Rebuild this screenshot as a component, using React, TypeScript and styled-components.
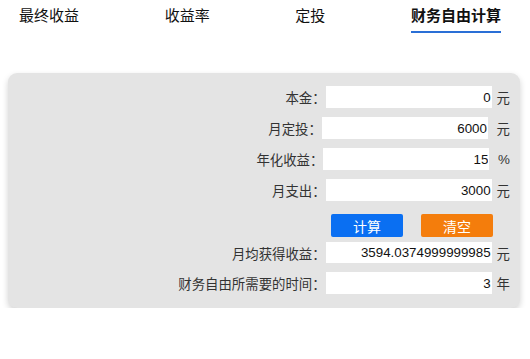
import styled, { createGlobalStyle } from 'styled-components'

const GlobalStyle = createGlobalStyle`
  body {
    margin: 0;
    background: #ffffff;
    font-family: 'Liberation Sans', 'Noto Sans CJK SC', sans-serif;
    color: #222;
  }
`

const Tabs = styled.div`
  display: flex;
  justify-content: space-between;
  align-items: flex-start;
  height: 35px;
  padding: 0 29px 0 19px;
  box-sizing: border-box;
`

const Tab = styled.div<{ $active?: boolean }>`
  padding-top: 7px;
  padding-bottom: ${props => (props.$active ? '6px' : '8px')};
  font-size: 15px;
  line-height: 18px;
  color: #111;
  font-weight: ${props => (props.$active ? 700 : 400)};
  border-bottom: ${props => (props.$active ? '2px solid #2a6fd6' : 'none')};
`

const Panel = styled.div`
  margin: 38px 10px 0 8px;
  padding: 13px 10px 14px 0;
  background: #e4e4e4;
  border-radius: 9px;
  box-shadow: 0 3px 6px rgba(0, 0, 0, 0.18);
`

const Row = styled.div<{ $h?: number; $mb?: number }>`
  display: flex;
  justify-content: flex-end;
  align-items: center;
  height: ${props => props.$h ?? 22}px;
  margin-bottom: ${props => props.$mb ?? 9}px;
  font-size: 13.4px;
  color: #333;
`

const Label = styled.span`
  margin-right: 0;
  white-space: pre;
`

const Field = styled.input`
  width: 166px;
  height: 100%;
  box-sizing: border-box;
  border: none;
  outline: none;
  background: #ffffff;
  padding: 0 1px 0 0;
  text-align: right;
  font-family: 'Liberation Sans', sans-serif;
  font-size: 13.33px;
  color: #111;
`

const Unit = styled.span`
  margin-left: 5px;
  white-space: pre;
  color: #333;
`

const ButtonRow = styled.div`
  display: flex;
  justify-content: flex-end;
  gap: 18px;
  padding: 4px 17px 5px 0;
`

const Button = styled.button<{ $color: string }>`
  width: 72px;
  height: 23px;
  border: none;
  border-radius: 2px;
  background: ${props => props.$color};
  color: #fff;
  font-family: 'Noto Sans CJK SC', sans-serif;
  font-size: 14px;
  padding: 0;
`

const fields = [
  { label: '本金：', value: '0', unit: '元' },
  { label: '月定投：', value: '6000', unit: '\u00a0元' },
  { label: '年化收益：', value: '15', unit: '\u00a0%' },
  { label: '月支出：', value: '3000', unit: '元' },
]

export default function App() {
  return (
    <>
      <GlobalStyle />
      <Tabs>
        <Tab>最终收益</Tab>
        <Tab>收益率</Tab>
        <Tab>定投</Tab>
        <Tab $active>财务自由计算</Tab>
      </Tabs>
      <Panel>
        {fields.map(f => (
          <Row key={f.label}>
            <Label>{f.label}</Label>
            <Field defaultValue={f.value} />
            <Unit>{f.unit}</Unit>
          </Row>
        ))}
        <ButtonRow>
          <Button $color="#0a6ff2">计算</Button>
          <Button $color="#f47d0c">清空</Button>
        </ButtonRow>
        <Row $h={21}>
          <Label>月均获得收益：</Label>
          <Field defaultValue="3594.0374999999985" readOnly />
          <Unit>元</Unit>
        </Row>
        <Row $mb={0}>
          <Label>财务自由所需要的时间：</Label>
          <Field defaultValue="3" readOnly />
          <Unit>年</Unit>
        </Row>
      </Panel>
    </>
  )
}
